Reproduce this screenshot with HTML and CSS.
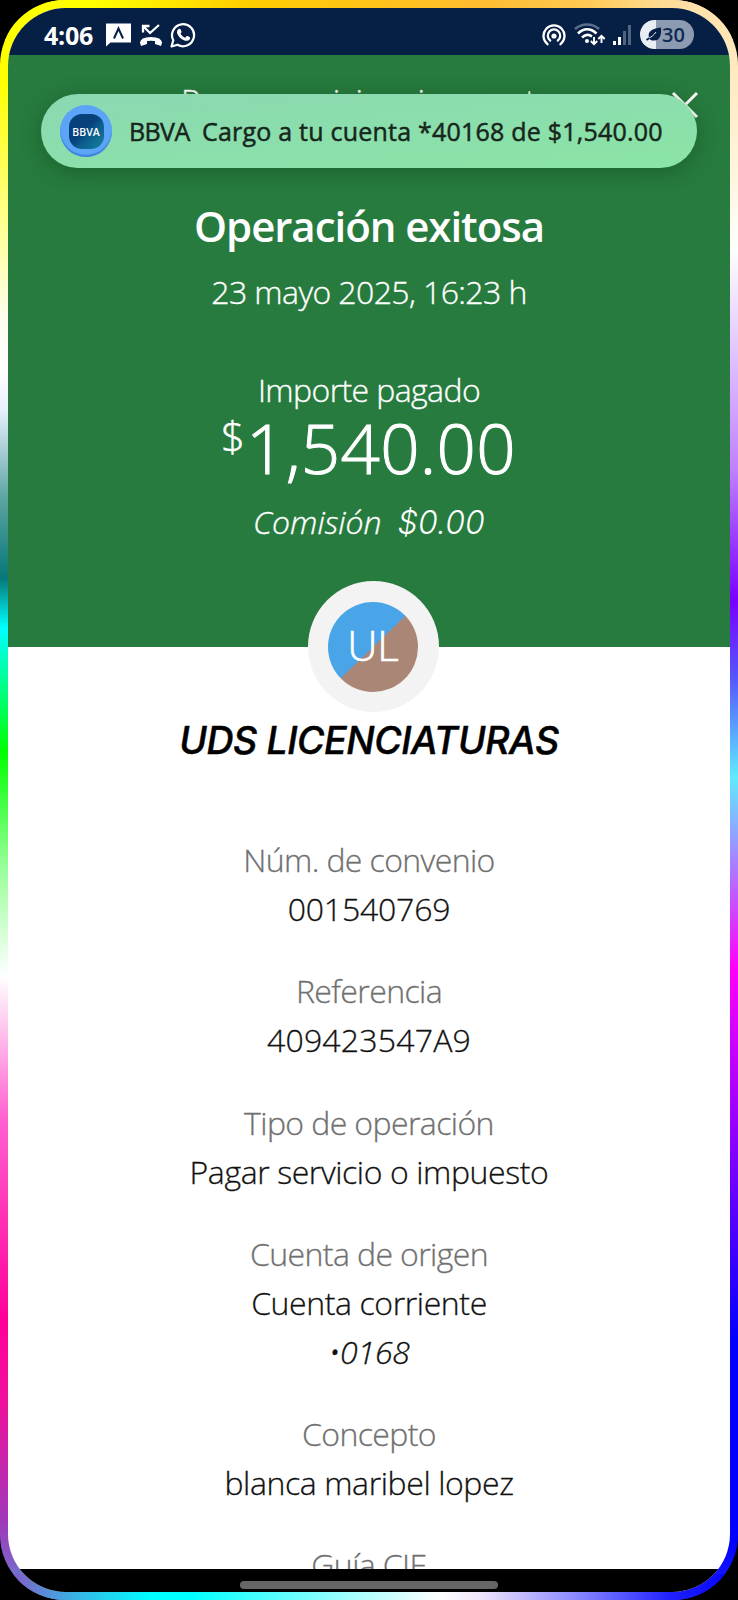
FILE: index.html
```
<!DOCTYPE html>
<html lang="es">
<head>
<meta charset="utf-8">
<title>Operación exitosa</title>
<link rel="stylesheet" href="styles.css">
</head>
<body>
<div class="device">
  <div class="edge-band edge-top"></div>
  <div class="edge-band edge-bottom"></div>
  <div class="screen">
    <div class="status-bar">
      <span class="clock">4:06</span>
      <div class="status-left">
        <svg width="26" height="24" viewBox="0 0 26 24"><path d="M0 0.500H25V19.500H4.500L0 23.500Z" fill="#fff"/><path d="M8 15.500L12.500 5.500L17 15.500" fill="none" stroke="#061f45" stroke-width="2"/></svg>
        <svg width="24" height="24" viewBox="0 0 24 24" fill="none" stroke="#fff"><path d="M4 9.500V3H10.500M4.500 3.500L11 10L20 2" stroke-width="2.300"/><path d="M3 20C3 16.500 7 15.800 12 15.800S21 16.500 21 20" stroke-width="3.800"/><path d="M0.800 19L2 23L8 21V17ZM23.200 19L22 23L16 21V17Z" fill="#fff" stroke="none"/></svg>
        <svg width="26" height="26" viewBox="0 0 26 26"><path d="M1.500 24.500L3.300 18.300A11 11 0 1 1 7.500 22.700Z" fill="none" stroke="#fff" stroke-width="2.200" stroke-linejoin="round"/><path d="M8.400 7.200C9.300 6.500 10.200 6.600 10.600 7.500L11.500 9.600C11.700 10.300 11.200 10.800 10.500 11.600C11.600 13.700 13 14.900 15.100 15.700L16.600 14.200C17 13.900 17.300 13.900 17.700 14.100L19.800 15.200C20.300 15.500 20.200 16.700 19.600 17.500C18.500 18.900 16.400 19.200 14.400 18.400C10.800 17 8.500 14.600 7.300 11.700C6.600 9.900 7.100 8.200 8.400 7.200Z" fill="#fff"/></svg>
      </div>
      <div class="status-right">
        <svg width="24" height="22" viewBox="0 0 24 22" fill="none" stroke="#fff" stroke-width="2.300" stroke-linecap="round"><path d="M5.500 20.200A10.500 10.500 0 1 1 18.500 20.200"/><path d="M8.200 16.500A6.200 6.200 0 1 1 15.800 16.500"/><circle cx="12" cy="12" r="2.600" fill="#fff" stroke="none"/></svg>
        <svg width="32" height="24" viewBox="0 0 32 24" fill="none" stroke="#fff" stroke-width="2.600"><path d="M1 6C8 0 18 0 25 6" stroke="#5c6f8c"/><path d="M4 10.500C9.500 5 16.500 5 22.500 10.500M8 14.500C11.500 11.300 15 11.300 18 13.500"/><circle cx="13" cy="18" r="2" fill="#fff" stroke="none"/><path d="M20 14V21M16.800 18L20 21.200L23.200 18M27.500 20V13M24.300 16L27.500 12.800L30.700 16" stroke-width="1.900"/></svg>
        <svg width="20" height="22" viewBox="0 0 20 22"><path d="M1 17H4V21H1ZM6 13H9V21H6Z" fill="#fff"/><path d="M11 7H14V21H11ZM16 1H19V21H16Z" fill="#50637f"/></svg>
        <div class="battery">
          <svg width="16" height="15" viewBox="0 0 16 15"><path d="M15 0.500C15.500 7 14.500 13.500 8 13.500C6 13.500 4.500 13 3.500 12L1 13.700L0 12.300L3 10.200C1.500 5 5 1.800 15 0.500Z" fill="#061f45"/><path d="M3 11C5.500 10 8 8 10 5" stroke="#e9edf4" fill="none"/></svg>
          <span>30</span>
        </div>
      </div>
    </div>
    <header class="hero">
      <div class="app-bar">
        <span class="app-title">Pagar servicio o impuesto</span>
        <svg class="close" width="28" height="28" viewBox="0 0 28 28"><path d="M2 2L26 26M26 2L2 26" stroke="#fff" stroke-width="3"/></svg>
      </div>
      <h1>Operación exitosa</h1>
      <p class="date">23 mayo 2025, 16:23 h</p>
      <p class="amount-label">Importe pagado</p>
      <p class="amount"><span class="currency">$</span><span>1,540.00</span></p>
      <p class="fee"><span>Comisión</span><span class="fee-value">$0.00</span></p>
    </header>
    <main class="details">
      <div class="avatar"><div class="avatar-disc">UL</div></div>
      <h2>UDS LICENCIATURAS</h2>
      <dl>
        <div class="row"><dt>Núm. de convenio</dt><dd class="digits">001540769</dd></div>
        <div class="row"><dt>Referencia</dt><dd class="reference">409423547A9</dd></div>
        <div class="row"><dt>Tipo de operación</dt><dd>Pagar servicio o impuesto</dd></div>
        <div class="row"><dt>Cuenta de origen</dt><dd>Cuenta corriente</dd><dd class="account">•0168</dd></div>
        <div class="row"><dt>Concepto</dt><dd>blanca maribel lopez</dd></div>
        <div class="row"><dt>Guía CIE</dt></div>
      </dl>
    </main>
    <nav class="nav-bar"><span class="nav-handle"></span></nav>
    <aside class="toast">
      <div class="toast-icon"><div class="toast-logo">BBVA</div></div>
      <span class="toast-app">BBVA</span>
      <span class="toast-text">Cargo a tu cuenta *40168 de $1,540.00</span>
    </aside>
  </div>
</div>
</body>
</html>
```
FILE: styles.css
```
* { box-sizing: border-box; }
body, h1, h2, p, dl, dd { margin: 0; }
body { background: #000; font-family: "Open Sans", "Noto Sans", sans-serif; }
svg { display: block; flex: none; }

.device {
  position: relative;
  width: 738px;
  height: 1600px;
  padding: 8px;
  border-radius: 65px;
  overflow: hidden;
  background:
    linear-gradient(180deg, #ff0 0, #ff0 80px, #ffff66 180px, #fffff0 320px, #fff 371px, #e8f0ff 410px, #5aa3a0 500px, #077878 578px, #0ff 628px, #0f0 752px, #90ff90 860px, #fff 976px, #ff60d0 1120px, #f09 1320px, #f0109c 1400px, #a038b8 1520px, #8060c8 1565px, #40a8e0 1600px) left / 50% 100% no-repeat,
    linear-gradient(180deg, #ffe4b0 0, #ffecc8 100px, #fff6e0 180px, #fff 250px, #c080ff 470px, #7a00ff 600px, #5555ff 677px, #60eaff 777px, #f0f 968px, #a000ff 1110px, #00f 1341px, #00f 1540px, #2020ff 1600px) right / 50% 100% no-repeat;
}
.edge-band { position: absolute; left: 0; right: 0; }
.edge-top { top: 0; height: 40px; background: linear-gradient(90deg, #ff0 0, #ff0 90px, #fc0 250px, #ffbc30 480px, #ffc850 580px, #ffe0a8 690px, #ffe8b8 738px); }
.edge-bottom { bottom: 0; height: 26px; background: linear-gradient(90deg, #8060c8 15px, #40a8e0 65px, #0ff 150px, #0ff 190px, #70ffff 300px, #fff 440px, #f0e4fa 480px, #8080ff 585px, #2020ff 670px, #00f 738px); }

.screen {
  position: relative;
  display: flex;
  flex-direction: column;
  height: 1584px;
  border-radius: 58px;
  overflow: hidden;
  background: #fff;
}

.status-bar {
  display: flex;
  align-items: center;
  flex: none;
  height: 47px;
  padding: 6px 36px 0;
  background: #061f45;
  color: #fff;
}
.clock { width: 62px; font: 700 25px/30px "Open Sans", sans-serif; letter-spacing: -.2px; }
.status-left, .status-right { display: flex; align-items: center; }
.status-left { gap: 7px; }
.status-right { margin-left: auto; gap: 8px; }
.status-right svg:nth-child(3) { margin-left: -2px; }
.battery {
  display: flex;
  align-items: center;
  width: 54px;
  height: 29px;
  padding-left: 6px;
  border-radius: 15px;
  background: linear-gradient(90deg, #e9edf4 16px, #8d9bb2 16px);
  color: #0f2a50;
  font: 600 20px/28px "Open Sans", sans-serif;
}

.hero {
  display: flex;
  flex-direction: column;
  align-items: center;
  flex: none;
  height: 592px;
  background: #277b3e;
  color: #fff;
  font-size: 32px;
  font-weight: 300;
  line-height: 44px;
  white-space: nowrap;
  -webkit-text-stroke: .35px;
}
.app-bar { display: flex; width: 100%; padding: 25px 31px 0 173px; justify-content: space-between; }
.app-title { font-size: 33px; letter-spacing: -.25px; }
.close { margin-top: 11px; }
h1 { margin-top: 74px; font-size: 42px; font-weight: 600; line-height: 56px; letter-spacing: -1.05px; -webkit-text-stroke: 0; }
.date { margin-top: 16px; letter-spacing: -.6px; }
.amount-label { margin-top: 54px; letter-spacing: -.6px; }
.amount { display: flex; height: 71px; margin-left: -1px; font-size: 69px; line-height: 70px; letter-spacing: .3px; -webkit-text-stroke: 1px; }
.currency { width: 25px; font-size: 42px; line-height: 48px; -webkit-text-stroke: .5px; }
.fee { display: flex; gap: 16px; margin-top: 17px; font-style: italic; }
.fee-value { padding-top: 1px; font-family: "Inter", sans-serif; letter-spacing: .1px; -webkit-text-stroke: 0; }

.details {
  display: flex;
  flex-direction: column;
  align-items: center;
  height: 922px;
  color: #111;
  font-size: 32px;
  font-weight: 300;
  line-height: 49px;
  text-align: center;
  white-space: nowrap;
  -webkit-text-stroke: .3px;
}
.avatar {
  display: grid;
  place-items: center;
  flex: none;
  width: 131px;
  height: 131px;
  margin: -66px 0 0 8px;
  border-radius: 50%;
  background: #f3f3f3;
  z-index: 1;
}
.avatar-disc {
  width: 90px;
  height: 90px;
  border-radius: 50%;
  background: linear-gradient(136deg, #4aa5e8 49.500%, #a98675 50.500%);
  color: #fff;
  font-size: 42px;
  line-height: 86px;
  -webkit-text-stroke: .6px;
}
h2 { margin: 3px 0 -2px; color: #000; font-family: "Inter", sans-serif; font-size: 37.500px; font-style: italic; font-weight: 500; line-height: 52px; letter-spacing: -.45px; -webkit-text-stroke: .5px; }
dl { display: flex; flex-direction: column; gap: 33.300px; margin-top: 70px; }
dt { color: #707070; letter-spacing: -.6px; }
dd { letter-spacing: -.4px; }
.digits { letter-spacing: -.2px; }
.reference { letter-spacing: .2px; }
.account { font-style: italic; letter-spacing: -.2px; }

.nav-bar {
  display: flex;
  justify-content: center;
  flex: none;
  height: 23px;
  padding-top: 12px;
  background: #000;
  z-index: 1;
}
.nav-handle { width: 258px; height: 8px; border-radius: 4px; background: #666; }

.toast {
  position: absolute;
  top: 86px;
  left: 33px;
  display: flex;
  align-items: center;
  width: 656px;
  height: 74px;
  padding-left: 19px;
  border-radius: 37px;
  background: linear-gradient(175deg, #8bd8b2, #8be5a6);
  box-shadow: 0 4px 22px rgba(0, 40, 15, .3);
  color: #17261c;
  font-size: 25px;
  font-weight: 500;
  white-space: nowrap;
  z-index: 2;
  -webkit-text-stroke: .5px;
}
.toast-icon {
  display: grid;
  place-items: center;
  flex: none;
  width: 52px;
  height: 52px;
  border-radius: 50%;
  background: #5ba4f8;
  box-shadow: inset 0 -2px 1px #3d82d8;
}
.toast-logo {
  width: 35px;
  height: 35px;
  border-radius: 13px;
  background: linear-gradient(135deg, #07417c 45%, #0b5c8c 60%, #1684a0);
  color: #fff;
  font: 600 10.500px/36px "Open Sans", sans-serif;
  text-align: center;
  -webkit-text-stroke: 0;
}
.toast-app { width: 73px; margin-left: 17px; letter-spacing: -.6px; }
.toast-text { letter-spacing: .22px; }
```
